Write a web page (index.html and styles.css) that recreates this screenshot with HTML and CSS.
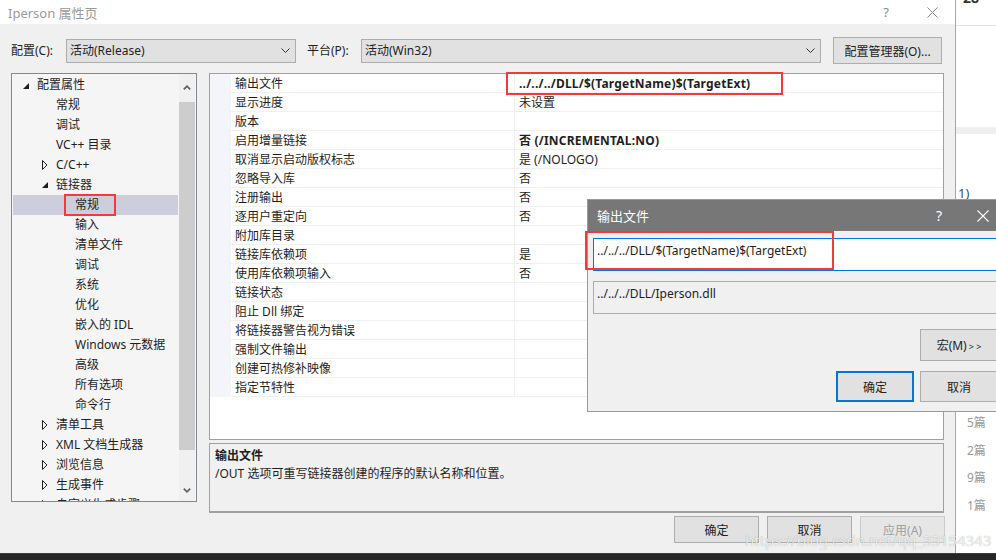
FILE: index.html
```html
<!DOCTYPE html>
<html lang="zh-CN">
<head>
    <meta charset="UTF-8">
    <title>Iperson 属性页</title>
    <link rel="stylesheet" href="styles.css">
</head>
<body>
<div class="screen">
    <div class="workspace">
        <!-- Main property page dialog -->
        <div class="dialog">
            <div class="titlebar">
                <span class="title">Iperson 属性页</span>
                <span class="help">?</span>
                <svg class="close" width="11" height="11" viewBox="0 0 11 11"><path d="M0.5 0.5 L10.5 10.5 M10.5 0.5 L0.5 10.5" stroke="#8a8a8a" stroke-width="1" fill="none"/></svg>
            </div>
            <div class="dialog-body">
                <div class="config-row">
                    <span class="cfg-label">配置(C):</span>
                    <div class="combo combo-config">
                        <span>活动(Release)</span>
                        <svg width="9" height="5" viewBox="0 0 9 5"><polyline points="0.5,0.5 4.5,4.5 8.5,0.5" stroke="#333" fill="none"/></svg>
                    </div>
                    <span class="cfg-label plat">平台(P):</span>
                    <div class="combo combo-platform">
                        <span>活动(Win32)</span>
                        <svg width="9" height="5" viewBox="0 0 9 5"><polyline points="0.5,0.5 4.5,4.5 8.5,0.5" stroke="#333" fill="none"/></svg>
                    </div>
                    <button class="btn btn-manager">配置管理器(O)...</button>
                </div>

                <div class="main">
                    <!-- Tree -->
                    <div class="tree">
                        <ul class="tree-list">
                            <li class="lvl0"><span class="arrow"><svg width="6" height="6" viewBox="0 0 6 6"><polygon points="6,0 6,6 0,6" fill="#1e1e1e"/></svg></span>配置属性</li>
                            <li class="lvl1"><span class="arrow"></span>常规</li>
                            <li class="lvl1"><span class="arrow"></span>调试</li>
                            <li class="lvl1"><span class="arrow"></span>VC++ 目录</li>
                            <li class="lvl1"><span class="arrow"><svg width="6" height="10" viewBox="0 0 6 10"><polygon points="0.5,0.5 5,5 0.5,9.5" stroke="#1e1e1e" fill="none"/></svg></span>C/C++</li>
                            <li class="lvl1"><span class="arrow"><svg width="6" height="6" viewBox="0 0 6 6"><polygon points="6,0 6,6 0,6" fill="#1e1e1e"/></svg></span>链接器</li>
                            <li class="lvl2 selected"><span class="arrow"></span>常规</li>
                            <li class="lvl2"><span class="arrow"></span>输入</li>
                            <li class="lvl2"><span class="arrow"></span>清单文件</li>
                            <li class="lvl2"><span class="arrow"></span>调试</li>
                            <li class="lvl2"><span class="arrow"></span>系统</li>
                            <li class="lvl2"><span class="arrow"></span>优化</li>
                            <li class="lvl2"><span class="arrow"></span>嵌入的 IDL</li>
                            <li class="lvl2"><span class="arrow"></span>Windows 元数据</li>
                            <li class="lvl2"><span class="arrow"></span>高级</li>
                            <li class="lvl2"><span class="arrow"></span>所有选项</li>
                            <li class="lvl2"><span class="arrow"></span>命令行</li>
                            <li class="lvl1"><span class="arrow"><svg width="6" height="10" viewBox="0 0 6 10"><polygon points="0.5,0.5 5,5 0.5,9.5" stroke="#1e1e1e" fill="none"/></svg></span>清单工具</li>
                            <li class="lvl1"><span class="arrow"><svg width="6" height="10" viewBox="0 0 6 10"><polygon points="0.5,0.5 5,5 0.5,9.5" stroke="#1e1e1e" fill="none"/></svg></span>XML 文档生成器</li>
                            <li class="lvl1"><span class="arrow"><svg width="6" height="10" viewBox="0 0 6 10"><polygon points="0.5,0.5 5,5 0.5,9.5" stroke="#1e1e1e" fill="none"/></svg></span>浏览信息</li>
                            <li class="lvl1"><span class="arrow"><svg width="6" height="10" viewBox="0 0 6 10"><polygon points="0.5,0.5 5,5 0.5,9.5" stroke="#1e1e1e" fill="none"/></svg></span>生成事件</li>
                            <li class="lvl1"><span class="arrow"><svg width="6" height="10" viewBox="0 0 6 10"><polygon points="0.5,0.5 5,5 0.5,9.5" stroke="#1e1e1e" fill="none"/></svg></span>自定义生成步骤</li>
                        </ul>
                        <div class="scrollbar">
                            <div class="sb-arrow sb-up">
                                <svg width="8" height="5" viewBox="0 0 8 5"><polyline points="0.8,4.4 4,1.2 7.2,4.4" stroke="#606060" stroke-width="1.7" fill="none"/></svg>
                            </div>
                            <div class="sb-thumb"></div>
                            <div class="sb-track"></div>
                            <div class="sb-arrow sb-down">
                                <svg width="8" height="5" viewBox="0 0 8 5"><polyline points="0.8,0.6 4,3.8 7.2,0.6" stroke="#606060" stroke-width="1.7" fill="none"/></svg>
                            </div>
                        </div>
                    </div>

                    <div class="right-col">
                        <!-- Property grid -->
                        <div class="grid">
                            <div class="row"><div class="margin"></div><div class="name">输出文件</div><div class="value bold">../../../DLL/$(TargetName)$(TargetExt)</div></div>
                            <div class="row"><div class="margin"></div><div class="name">显示进度</div><div class="value">未设置</div></div>
                            <div class="row"><div class="margin"></div><div class="name">版本</div><div class="value"></div></div>
                            <div class="row"><div class="margin"></div><div class="name">启用增量链接</div><div class="value bold">否 (/INCREMENTAL:NO)</div></div>
                            <div class="row"><div class="margin"></div><div class="name">取消显示启动版权标志</div><div class="value">是 (/NOLOGO)</div></div>
                            <div class="row"><div class="margin"></div><div class="name">忽略导入库</div><div class="value">否</div></div>
                            <div class="row"><div class="margin"></div><div class="name">注册输出</div><div class="value">否</div></div>
                            <div class="row"><div class="margin"></div><div class="name">逐用户重定向</div><div class="value">否</div></div>
                            <div class="row"><div class="margin"></div><div class="name">附加库目录</div><div class="value"></div></div>
                            <div class="row"><div class="margin"></div><div class="name">链接库依赖项</div><div class="value">是</div></div>
                            <div class="row"><div class="margin"></div><div class="name">使用库依赖项输入</div><div class="value">否</div></div>
                            <div class="row"><div class="margin"></div><div class="name">链接状态</div><div class="value"></div></div>
                            <div class="row"><div class="margin"></div><div class="name">阻止 Dll 绑定</div><div class="value"></div></div>
                            <div class="row"><div class="margin"></div><div class="name">将链接器警告视为错误</div><div class="value"></div></div>
                            <div class="row"><div class="margin"></div><div class="name">强制文件输出</div><div class="value"></div></div>
                            <div class="row"><div class="margin"></div><div class="name">创建可热修补映像</div><div class="value"></div></div>
                            <div class="row"><div class="margin"></div><div class="name">指定节特性</div><div class="value"></div></div>
                        </div>

                        <!-- Description -->
                        <div class="desc">
                            <div class="desc-title">输出文件</div>
                            <div class="desc-text">/OUT 选项可重写链接器创建的程序的默认名称和位置。</div>
                        </div>

                        <div class="footer">
                            <button class="btn btn-foot">确定</button>
                            <button class="btn btn-foot">取消</button>
                            <button class="btn btn-foot disabled">应用(A)</button>
                        </div>
                    </div>
                </div>
            </div>
        </div>

        <!-- Page behind the dialog -->
        <div class="side">
            <div class="side-top"><span class="side-cut">28</span></div>
            <div class="side-band"></div>
            <div class="side-paren">1)</div>
            <ul class="side-counts">
                <li>5篇</li>
                <li>2篇</li>
                <li>9篇</li>
                <li>1篇</li>
            </ul>
        </div>
    </div>
    <div class="taskbar"></div>

    <!-- Edit dialog over the property page -->
    <div class="sub-dialog">
        <div class="sub-title">
            <span>输出文件</span>
            <span class="sub-help">?</span>
            <svg class="sub-close" width="12" height="12" viewBox="0 0 12 12"><path d="M0.5 0.5 L11.5 11.5 M11.5 0.5 L0.5 11.5" stroke="#fff" stroke-width="1.1" fill="none"/></svg>
        </div>
        <div class="sub-body">
            <div class="sub-input">../../../DLL/$(TargetName)$(TargetExt)</div>
            <div class="sub-eval">../../../DLL/Iperson.dll</div>
            <div class="sub-macro-row"><button class="btn sub-btn">宏(M)<span class="gt">&gt; &gt;</span></button></div>
            <div class="sub-actions">
                <button class="btn sub-btn default">确定</button>
                <button class="btn sub-btn">取消</button>
            </div>
        </div>
    </div>

    <!-- Red annotation boxes -->
    <div class="mark mark-tree"></div>
    <div class="mark mark-grid"></div>
    <div class="mark mark-sub"></div>

    <div class="watermark">https://blog.csdn.net/qq_33154343</div>
</div>
</body>
</html>
```

FILE: styles.css
```css
body {
    margin: 0;
    padding: 0;
    font-family: "Noto Sans", "Noto Sans CJK SC", sans-serif;
    font-size: 12px;
    color: #1e1e1e;
}

ul {
    list-style: none;
    margin: 0;
    padding: 0;
}

.screen {
    width: 996px;
    height: 560px;
    position: relative;
    overflow: hidden;
    background-color: #fff;
}

.workspace {
    display: flex;
    height: 553px;
}

/* Main dialog */
.dialog {
    width: 955px;
    flex-shrink: 0;
    background-color: #f0f0f0;
    border-right: 1px solid #a5a5a5;
    display: flex;
    flex-direction: column;
}

.titlebar {
    height: 24px;
    background-color: #fff;
    display: flex;
    align-items: center;
    padding-left: 8px;
}

.title {
    font-size: 13px;
    color: #9a9a9a;
    flex: 1;
}

.help {
    font-size: 13px;
    color: #8a8a8a;
    margin-right: 38px;
}

.close {
    margin-right: 17px;
}

.dialog-body {
    padding: 13px 0 0 11px;
}

.config-row {
    display: flex;
    align-items: center;
    height: 27px;
}

.cfg-label {
    width: 55px;
    line-height: 16px;
}

.cfg-label.plat {
    margin-left: 11px;
    width: 54px;
}

.combo {
    height: 24px;
    box-sizing: border-box;
    border: 1px solid #adadad;
    background-color: #e1e1e1;
    display: flex;
    align-items: center;
    justify-content: space-between;
    padding: 0 5px 0 3px;
    line-height: 16px;
}

.combo-config {
    width: 230px;
}

.combo-platform {
    width: 460px;
}

.btn {
    font-family: inherit;
    font-size: 12px;
    color: #1e1e1e;
    background-color: #e1e1e1;
    border: 1px solid #adadad;
    padding: 0;
    box-sizing: border-box;
}

.btn-manager {
    margin-left: 12px;
    width: 109px;
    height: 27px;
}

.main {
    display: flex;
    gap: 12px;
    margin-top: 9px;
}

/* Tree */
.tree {
    width: 186px;
    height: 429px;
    box-sizing: border-box;
    border: 1px solid #828790;
    background-color: #f5f5f5;
    display: flex;
    overflow: hidden;
}

.tree-list {
    flex: 1;
    padding-top: 1px;
}

.tree-list li {
    height: 20px;
    line-height: 20px;
    display: flex;
    align-items: center;
    white-space: nowrap;
    margin: 0 1px;
}

.tree-list .lvl0 {
    padding-left: 8px;
}

.tree-list .lvl1 {
    padding-left: 27px;
}

.tree-list .lvl2 {
    padding-left: 46px;
}

.tree-list .selected {
    background-color: #cccedb;
}

.arrow {
    width: 16px;
    flex-shrink: 0;
    display: flex;
    align-items: center;
    padding-left: 2px;
    box-sizing: border-box;
    height: 20px;
}

.lvl0 .arrow svg {
    margin-top: 2px;
}

.scrollbar {
    width: 16px;
    margin-right: 1px;
    background-color: #f0f0f0;
    display: flex;
    flex-direction: column;
}

.sb-arrow {
    display: flex;
    justify-content: center;
    align-items: center;
}

.sb-up {
    height: 27px;
    margin-bottom: 1px;
}

.sb-thumb {
    height: 348px;
    background-color: #cdcdcd;
}

.sb-track {
    flex: 1;
}

.sb-down {
    height: 22px;
}

/* Right column */
.right-col {
    width: 735px;
    display: flex;
    flex-direction: column;
}

.grid {
    height: 367px;
    box-sizing: border-box;
    border: 1px solid #a0a0a0;
    background-color: #fff;
}

.row {
    display: flex;
    height: 19px;
    line-height: 17px;
}

.margin {
    width: 21px;
    background-color: #f3f5fb;
}

.name {
    width: 284px;
    box-sizing: border-box;
    padding: 1px 0 0 4px;
    border-bottom: 1px solid #f0f0f0;
    border-right: 1px solid #f0f0f0;
}

.value {
    flex: 1;
    padding: 1px 0 0 4px;
    border-bottom: 1px solid #f0f0f0;
    white-space: nowrap;
}

.value.bold {
    font-weight: bold;
    letter-spacing: 0.2px;
}

.desc {
    margin-top: 3px;
    height: 70px;
    box-sizing: border-box;
    border: 1px solid #a0a0a0;
    border-bottom-width: 2px;
    background-color: #f0f0f0;
    padding: 3px 5px;
    line-height: 18px;
}

.desc-title {
    font-weight: bold;
}

.footer {
    margin-top: 3px;
    margin-right: -1px;
    display: flex;
    justify-content: flex-end;
    gap: 8px;
}

.btn-foot {
    width: 85px;
    height: 27px;
}

.btn-foot.disabled {
    color: #a0a0a0;
    background-color: #e6e6e6;
    border-color: #cccccc;
}

/* Page behind */
.side {
    flex: 1;
    background-color: #fff;
    overflow: hidden;
}

.side-top {
    height: 25px;
    border-bottom: 1px solid #e6e6e6;
    overflow: hidden;
    padding-left: 7px;
}

.side-cut {
    display: block;
    font-size: 14px;
    font-weight: bold;
    line-height: 14px;
    margin-top: -9px;
    color: #333;
}

.side-band {
    margin-top: 101px;
    height: 7px;
    background-color: #efefef;
}

.side-paren {
    margin-top: 50px;
    padding-left: 2px;
    line-height: 18px;
    font-size: 13px;
    color: #3a4a6a;
}

.side-counts {
    margin-top: 212px;
    padding-left: 11px;
    color: #9a9a9a;
}

.side-counts li {
    height: 27.5px;
    line-height: 18px;
}

.taskbar {
    height: 7px;
    background-color: #262626;
    border-top: 1px solid #3b3b3b;
    box-sizing: border-box;
}

/* Sub dialog */
.sub-dialog {
    position: absolute;
    left: 587px;
    top: 199px;
    width: 418px;
    background-color: #f0f0f0;
    border: 1px solid #9a9a9a;
    box-sizing: border-box;
}

.sub-title {
    height: 31px;
    background-color: #777777;
    color: #fff;
    font-size: 13px;
    display: flex;
    align-items: center;
    padding-left: 9px;
}

.sub-title span:first-child {
    flex: 1;
}

.sub-help {
    font-size: 14px;
    margin-right: 35px;
}

.sub-close {
    margin-right: 15px;
}

.sub-body {
    padding: 7px 6px 9px 5px;
}

.sub-input {
    height: 33px;
    box-sizing: border-box;
    border: 1px solid #0078d7;
    background-color: #fff;
    padding: 3px 3px;
    line-height: 18px;
    white-space: nowrap;
}

.sub-eval {
    margin-top: 10px;
    height: 33px;
    box-sizing: border-box;
    border: 1px solid #adadad;
    padding: 3px 3px;
    line-height: 18px;
}

.sub-macro-row {
    margin-top: 15px;
    display: flex;
    justify-content: flex-end;
}

.sub-macro-row .sub-btn {
    height: 32px;
}

.gt {
    font-size: 9px;
    margin-left: 2px;
}

.sub-actions {
    margin-top: 10px;
    display: flex;
    justify-content: flex-end;
    gap: 6px;
}

.sub-btn {
    width: 78px;
    height: 31px;
    font-size: 12px;
}

.sub-btn.default {
    border: 2px solid #0078d7;
}

/* Annotation boxes */
.mark {
    position: absolute;
    border: 2px solid #f23a3e;
    box-sizing: border-box;
}

.mark-tree {
    left: 64px;
    top: 194px;
    width: 52px;
    height: 22px;
}

.mark-grid {
    left: 506px;
    top: 72px;
    width: 277px;
    height: 23px;
}

.mark-sub {
    left: 585px;
    top: 231px;
    width: 249px;
    height: 39px;
}

.watermark {
    position: absolute;
    left: 745px;
    top: 530px;
    font-size: 15px;
    line-height: 20px;
    color: rgba(255, 255, 255, 0.8);
    text-shadow: 0 0 1px rgba(0, 0, 0, 0.35);
    white-space: nowrap;
}
```
